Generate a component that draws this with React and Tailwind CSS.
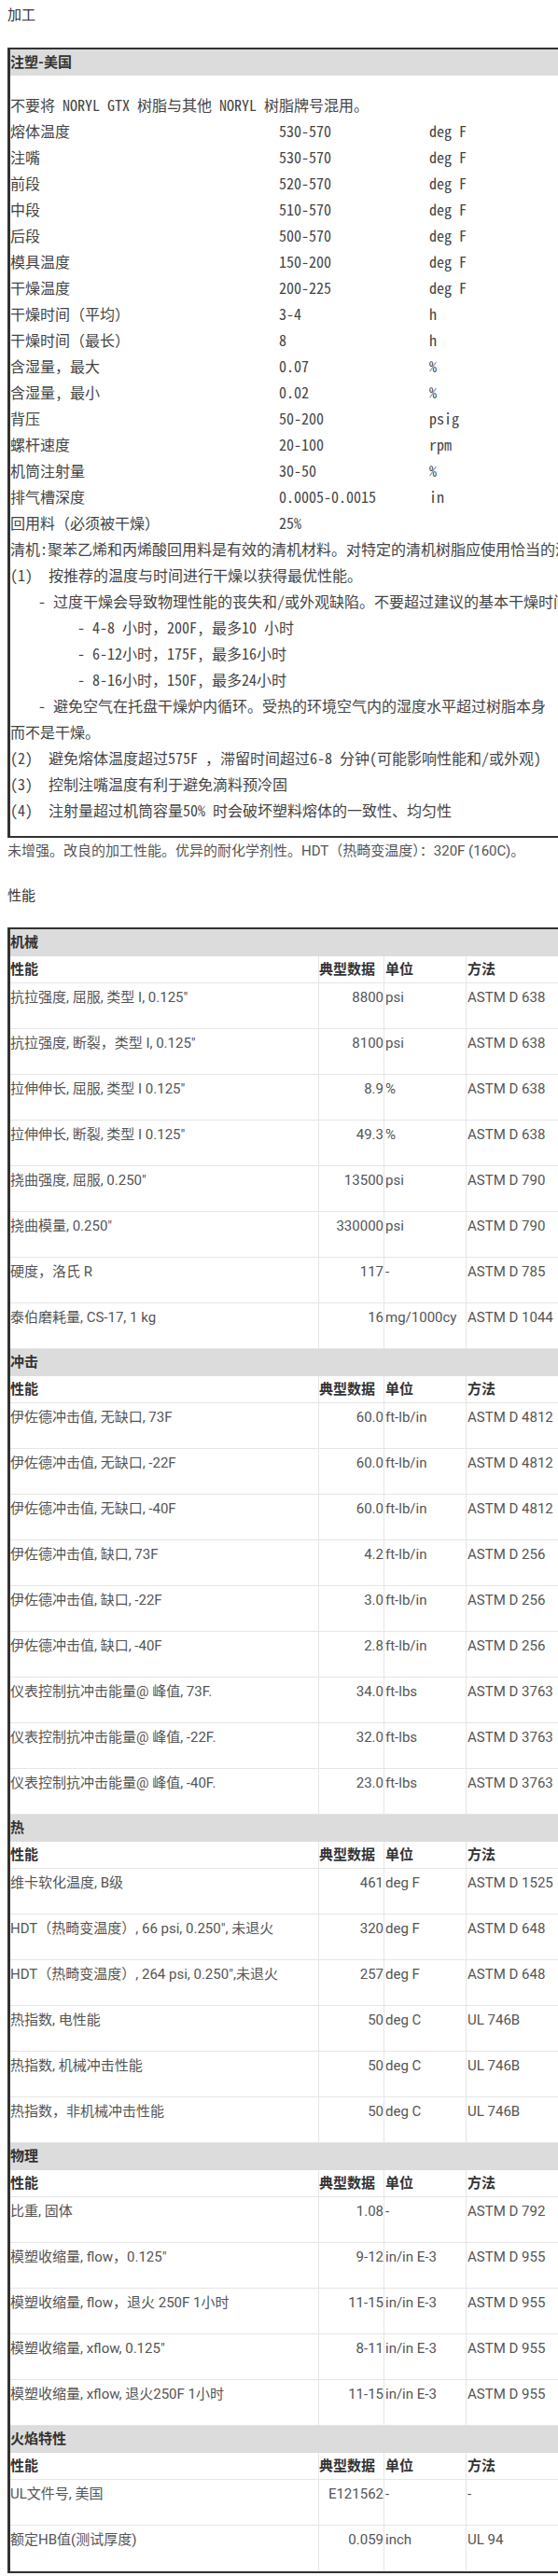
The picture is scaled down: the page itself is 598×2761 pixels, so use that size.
import React from 'react';

const mono = { fontFamily: '"Noto Sans Mono CJK SC", "Noto Sans CJK SC", "Liberation Mono", monospace' };
const sans = { fontFamily: 'Roboto, "Noto Sans CJK SC", sans-serif' };

const moldRows = [
  ['熔体温度', '530-570', 'deg F'],
  ['注嘴', '530-570', 'deg F'],
  ['前段', '520-570', 'deg F'],
  ['中段', '510-570', 'deg F'],
  ['后段', '500-570', 'deg F'],
  ['模具温度', '150-200', 'deg F'],
  ['干燥温度', '200-225', 'deg F'],
  ['干燥时间（平均）', '3-4', 'h'],
  ['干燥时间（最长）', '8', 'h'],
  ['含湿量，最大', '0.07', '%'],
  ['含湿量, 最小', '0.02', '%'],
  ['背压', '50-200', 'psig'],
  ['螺杆速度', '20-100', 'rpm'],
  ['机筒注射量', '30-50', '%'],
  ['排气槽深度', '0.0005-0.0015', 'in'],
  ['回用料（必须被干燥）', '25%', ''],
];

const sections = [
  {
    title: '机械',
    rows: [
      ['抗拉强度, 屈服, 类型 I, 0.125"', '8800', 'psi', 'ASTM D 638'],
      ['抗拉强度, 断裂，类型 I, 0.125"', '8100', 'psi', 'ASTM D 638'],
      ['拉伸伸长, 屈服, 类型 I 0.125"', '8.9', '%', 'ASTM D 638'],
      ['拉伸伸长, 断裂, 类型 I 0.125"', '49.3', '%', 'ASTM D 638'],
      ['挠曲强度, 屈服, 0.250"', '13500', 'psi', 'ASTM D 790'],
      ['挠曲模量, 0.250"', '330000', 'psi', 'ASTM D 790'],
      ['硬度，洛氏 R', '117', '-', 'ASTM D 785'],
      ['泰伯磨耗量, CS-17, 1 kg', '16', 'mg/1000cy', 'ASTM D 1044'],
    ],
  },
  {
    title: '冲击',
    rows: [
      ['伊佐德冲击值, 无缺口, 73F', '60.0', 'ft-lb/in', 'ASTM D 4812'],
      ['伊佐德冲击值, 无缺口, -22F', '60.0', 'ft-lb/in', 'ASTM D 4812'],
      ['伊佐德冲击值, 无缺口, -40F', '60.0', 'ft-lb/in', 'ASTM D 4812'],
      ['伊佐德冲击值, 缺口, 73F', '4.2', 'ft-lb/in', 'ASTM D 256'],
      ['伊佐德冲击值, 缺口, -22F', '3.0', 'ft-lb/in', 'ASTM D 256'],
      ['伊佐德冲击值, 缺口, -40F', '2.8', 'ft-lb/in', 'ASTM D 256'],
      ['仪表控制抗冲击能量@ 峰值, 73F.', '34.0', 'ft-lbs', 'ASTM D 3763'],
      ['仪表控制抗冲击能量@ 峰值, -22F.', '32.0', 'ft-lbs', 'ASTM D 3763'],
      ['仪表控制抗冲击能量@ 峰值, -40F.', '23.0', 'ft-lbs', 'ASTM D 3763'],
    ],
  },
  {
    title: '热',
    rows: [
      ['维卡软化温度, B级', '461', 'deg F', 'ASTM D 1525'],
      ['HDT（热畸变温度）, 66 psi, 0.250", 未退火', '320', 'deg F', 'ASTM D 648'],
      ['HDT（热畸变温度）, 264 psi, 0.250",未退火', '257', 'deg F', 'ASTM D 648'],
      ['热指数, 电性能', '50', 'deg C', 'UL 746B'],
      ['热指数, 机械冲击性能', '50', 'deg C', 'UL 746B'],
      ['热指数，非机械冲击性能', '50', 'deg C', 'UL 746B'],
    ],
  },
  {
    title: '物理',
    rows: [
      ['比重, 固体', '1.08', '-', 'ASTM D 792'],
      ['模塑收缩量, flow，0.125"', '9-12', 'in/in E-3', 'ASTM D 955'],
      ['模塑收缩量, flow，退火 250F 1小时', '11-15', 'in/in E-3', 'ASTM D 955'],
      ['模塑收缩量, xflow, 0.125"', '8-11', 'in/in E-3', 'ASTM D 955'],
      ['模塑收缩量, xflow, 退火250F 1小时', '11-15', 'in/in E-3', 'ASTM D 955'],
    ],
  },
  {
    title: '火焰特性',
    rows: [
      ['UL文件号, 美国', 'E121562', '-', '-'],
      ['额定HB值(测试厚度)', '0.059', 'inch', 'UL 94'],
    ],
  },
];

const Line = ({ children, className = '' }) => (
  <div className={`h-[28px] flex items-center whitespace-nowrap ${className}`}>{children}</div>
);

const Note = ({ num, children }) => (
  <Line>
    <span className="w-[41px] shrink-0">{num}</span>
    <span>{children}</span>
  </Line>
);

const PropSection = ({ title, rows }) => (
  <div>
    <div className="h-[29px] bg-[#dcdcdc] flex items-center font-bold text-[#333]">{title}</div>
    <div className="h-[29px] flex border-b border-[#e6e6e6] font-bold text-[#333]">
      <div className="w-[331px] border-r border-[#e6e6e6] flex items-center">性能</div>
      <div className="w-[70px] border-r border-[#e6e6e6] flex items-center whitespace-nowrap">典型数据</div>
      <div className="w-[88px] border-r border-[#e6e6e6] flex items-center pl-[1px]">单位</div>
      <div className="flex-1 flex items-center pl-[1px]">方法</div>
    </div>
    {rows.map((r, i) => (
      <div key={i} className="h-[49px] flex border-b border-[#e6e6e6] leading-[20px]">
        <div className="w-[331px] border-r border-[#e6e6e6] pt-[5px] whitespace-nowrap">{r[0]}</div>
        <div className="w-[70px] border-r border-[#e6e6e6] pt-[5px] text-right">{r[1]}</div>
        <div className="w-[88px] border-r border-[#e6e6e6] pt-[5px] pl-[1px] whitespace-nowrap">{r[2]}</div>
        <div className="flex-1 pt-[5px] pl-[1px] whitespace-nowrap">{r[3]}</div>
      </div>
    ))}
  </div>
);

export default function App() {
  return (
    <div className="w-[598px] h-[2761px] overflow-hidden bg-white pl-2 pt-[7px] text-[15px] text-[#555]" style={sans}>
      <h3 className="leading-[18px] text-[#333]">加工</h3>

      <div className="mt-[26px] w-[760px] border-2 border-l-[3px] border-[#333]">
        <div className="h-[28px] bg-[#dcdcdc] flex items-center font-bold text-[#333]">注塑-美国</div>
        <div className="pt-[17px] pb-[14px] text-[16px] text-[#444]" style={mono}>
          <Line>不要将 NORYL GTX 树脂与其他 NORYL 树脂牌号混用。</Line>
          {moldRows.map((r, i) => (
            <Line key={i}>
              <span className="w-[288px] shrink-0">{r[0]}</span>
              <span className="w-[161px] shrink-0">{r[1]}</span>
              <span>{r[2]}</span>
            </Line>
          ))}
          <Line>清机:聚苯乙烯和丙烯酸回用料是有效的清机材料。对特定的清机树脂应使用恰当的清机方法。</Line>
          <Note num="(1)">按推荐的温度与时间进行干燥以获得最优性能。</Note>
          <Line className="pl-[30px]">- 过度干燥会导致物理性能的丧失和/或外观缺陷。不要超过建议的基本干燥时间：</Line>
          <Line className="pl-[72px]">- 4-8 小时，200F, 最多10 小时</Line>
          <Line className="pl-[72px]">- 6-12小时，175F, 最多16小时</Line>
          <Line className="pl-[72px]">- 8-16小时，150F, 最多24小时</Line>
          <Line className="pl-[30px]">- 避免空气在托盘干燥炉内循环。受热的环境空气内的湿度水平超过树脂本身</Line>
          <Line>而不是干燥。</Line>
          <Note num="(2)">避免熔体温度超过575F ，滞留时间超过6-8 分钟(可能影响性能和/或外观)</Note>
          <Note num="(3)">控制注嘴温度有利于避免滴料预冷固</Note>
          <Note num="(4)">注射量超过机筒容量50% 时会破坏塑料熔体的一致性、均匀性</Note>
        </div>
      </div>

      <p className="mt-[4px] leading-[20px] whitespace-nowrap">
        未增强。改良的加工性能。优异的耐化学剂性。HDT（热畸变温度）：320F (160C)。
      </p>

      <h3 className="mt-[29px] leading-[18px] text-[#333]">性能</h3>

      <div className="mt-[25px] w-[760px] border-2 border-l-[3px] border-[#333]">
        {sections.map((s) => (
          <PropSection key={s.title} title={s.title} rows={s.rows} />
        ))}
      </div>
    </div>
  );
}
